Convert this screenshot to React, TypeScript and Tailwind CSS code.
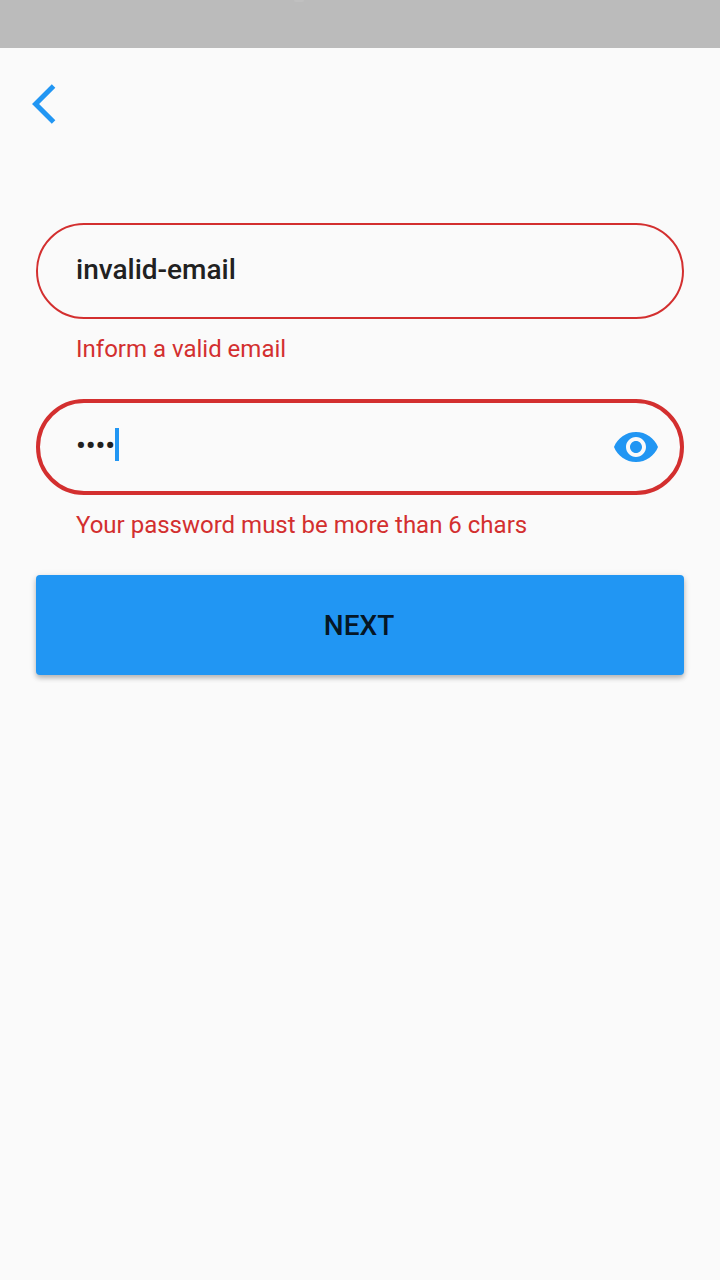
function BackIcon() {
  return (
    <svg width="48" height="48" viewBox="0 0 24 24" fill="#2196f3" aria-hidden="true">
      <path d="M11.67 3.87 9.9 2.1 0 12l9.9 9.9 1.77-1.77L3.54 12z" />
    </svg>
  );
}

function EyeIcon() {
  return (
    <svg width="48" height="48" viewBox="0 0 24 24" fill="#2196f3" aria-hidden="true">
      <path d="M12 4.5C7 4.5 2.73 7.61 1 12c1.73 4.39 6 7.5 11 7.5s9.27-3.11 11-7.5c-1.73-4.39-6-7.5-11-7.5zM12 17c-2.76 0-5-2.24-5-5s2.24-5 5-5 5 2.24 5 5-2.24 5-5 5zm0-8c-1.66 0-3 1.34-3 3s1.34 3 3 3 3-1.34 3-3-1.34-3-3-3z" />
    </svg>
  );
}

export default function App() {
  return (
    <div className="flex h-[1280px] w-[720px] flex-col overflow-hidden bg-[#fafafa] font-['Roboto',sans-serif]">
      <div className="h-12 shrink-0 bg-[#bbbbbb] pl-[294px]">
        <div className="h-0.5 w-2.5 rounded-b-full bg-[#c0c0c0]" />
      </div>
      <header className="flex h-28 shrink-0 items-center pl-8">
        <button aria-label="Back">
          <BackIcon />
        </button>
      </header>
      <main className="flex flex-col px-9 pt-[63px]">
        <div className="flex h-24 items-center rounded-full border-2 border-[#d32f2f] px-[38px] pb-0.5 text-[28px] font-medium text-[#212121]">
          invalid-email
        </div>
        <p className="mt-4 pl-10 text-[24px] leading-7 text-[#d32f2f]">Inform a valid email</p>
        <div className="mt-9 flex h-24 items-center justify-between rounded-full border-4 border-[#d32f2f] pr-5 pl-9">
          <div className="flex items-start pb-[5px]">
            <span className="pt-0.5 text-[28px] leading-8 font-medium text-[#212121]">••••</span>
            <span className="h-[33px] w-1 bg-[#2196f3]" />
          </div>
          <button aria-label="Show password">
            <EyeIcon />
          </button>
        </div>
        <p className="mt-4 pl-10 text-[24px] leading-7 text-[#d32f2f]">
          Your password must be more than 6 chars
        </p>
        <button className="mt-9 h-[100px] rounded-[4px] bg-[#2196f3] pt-0.5 pr-0.5 text-[28px] font-medium text-black/87 shadow-[0_3px_5px_0_rgba(0,0,0,0.25),0_1px_8px_0_rgba(0,0,0,0.07)]">
          NEXT
        </button>
      </main>
    </div>
  );
}
